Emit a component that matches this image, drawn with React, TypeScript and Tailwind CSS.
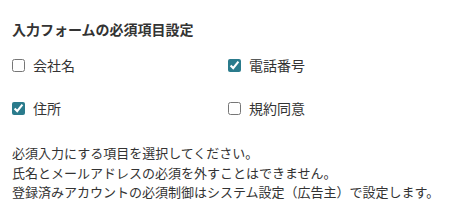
const fields = [
  { label: "会社名", checked: false },
  { label: "電話番号", checked: true },
  { label: "住所", checked: true },
  { label: "規約同意", checked: false },
];

export default function App() {
  return (
    <div
      className="w-[454px] h-[218px] bg-white px-3 pt-[19px] text-[#333333]"
      style={{ fontFamily: '"Noto Sans CJK JP", "Noto Sans", sans-serif' }}
    >
      <h2 className="text-[14px] leading-[20px] font-bold">入力フォームの必須項目設定</h2>
      <div className="mt-[5px] grid grid-cols-[216px_1fr]">
        {fields.map((f) => (
          <label key={f.label} className="flex h-[43px] items-center gap-2 text-[14px]">
            <input
              type="checkbox"
              defaultChecked={f.checked}
              className="h-[13px] w-[13px] accent-[#2a7b8c]"
            />
            <span>{f.label}</span>
          </label>
        ))}
      </div>
      <div className="mt-[13px] text-[13px] leading-[19.5px]">
        <p>必須入力にする項目を選択してください。</p>
        <p>氏名とメールアドレスの必須を外すことはできません。</p>
        <p>登録済みアカウントの必須制御はシステム設定（広告主）で設定します。</p>
      </div>
    </div>
  );
}
